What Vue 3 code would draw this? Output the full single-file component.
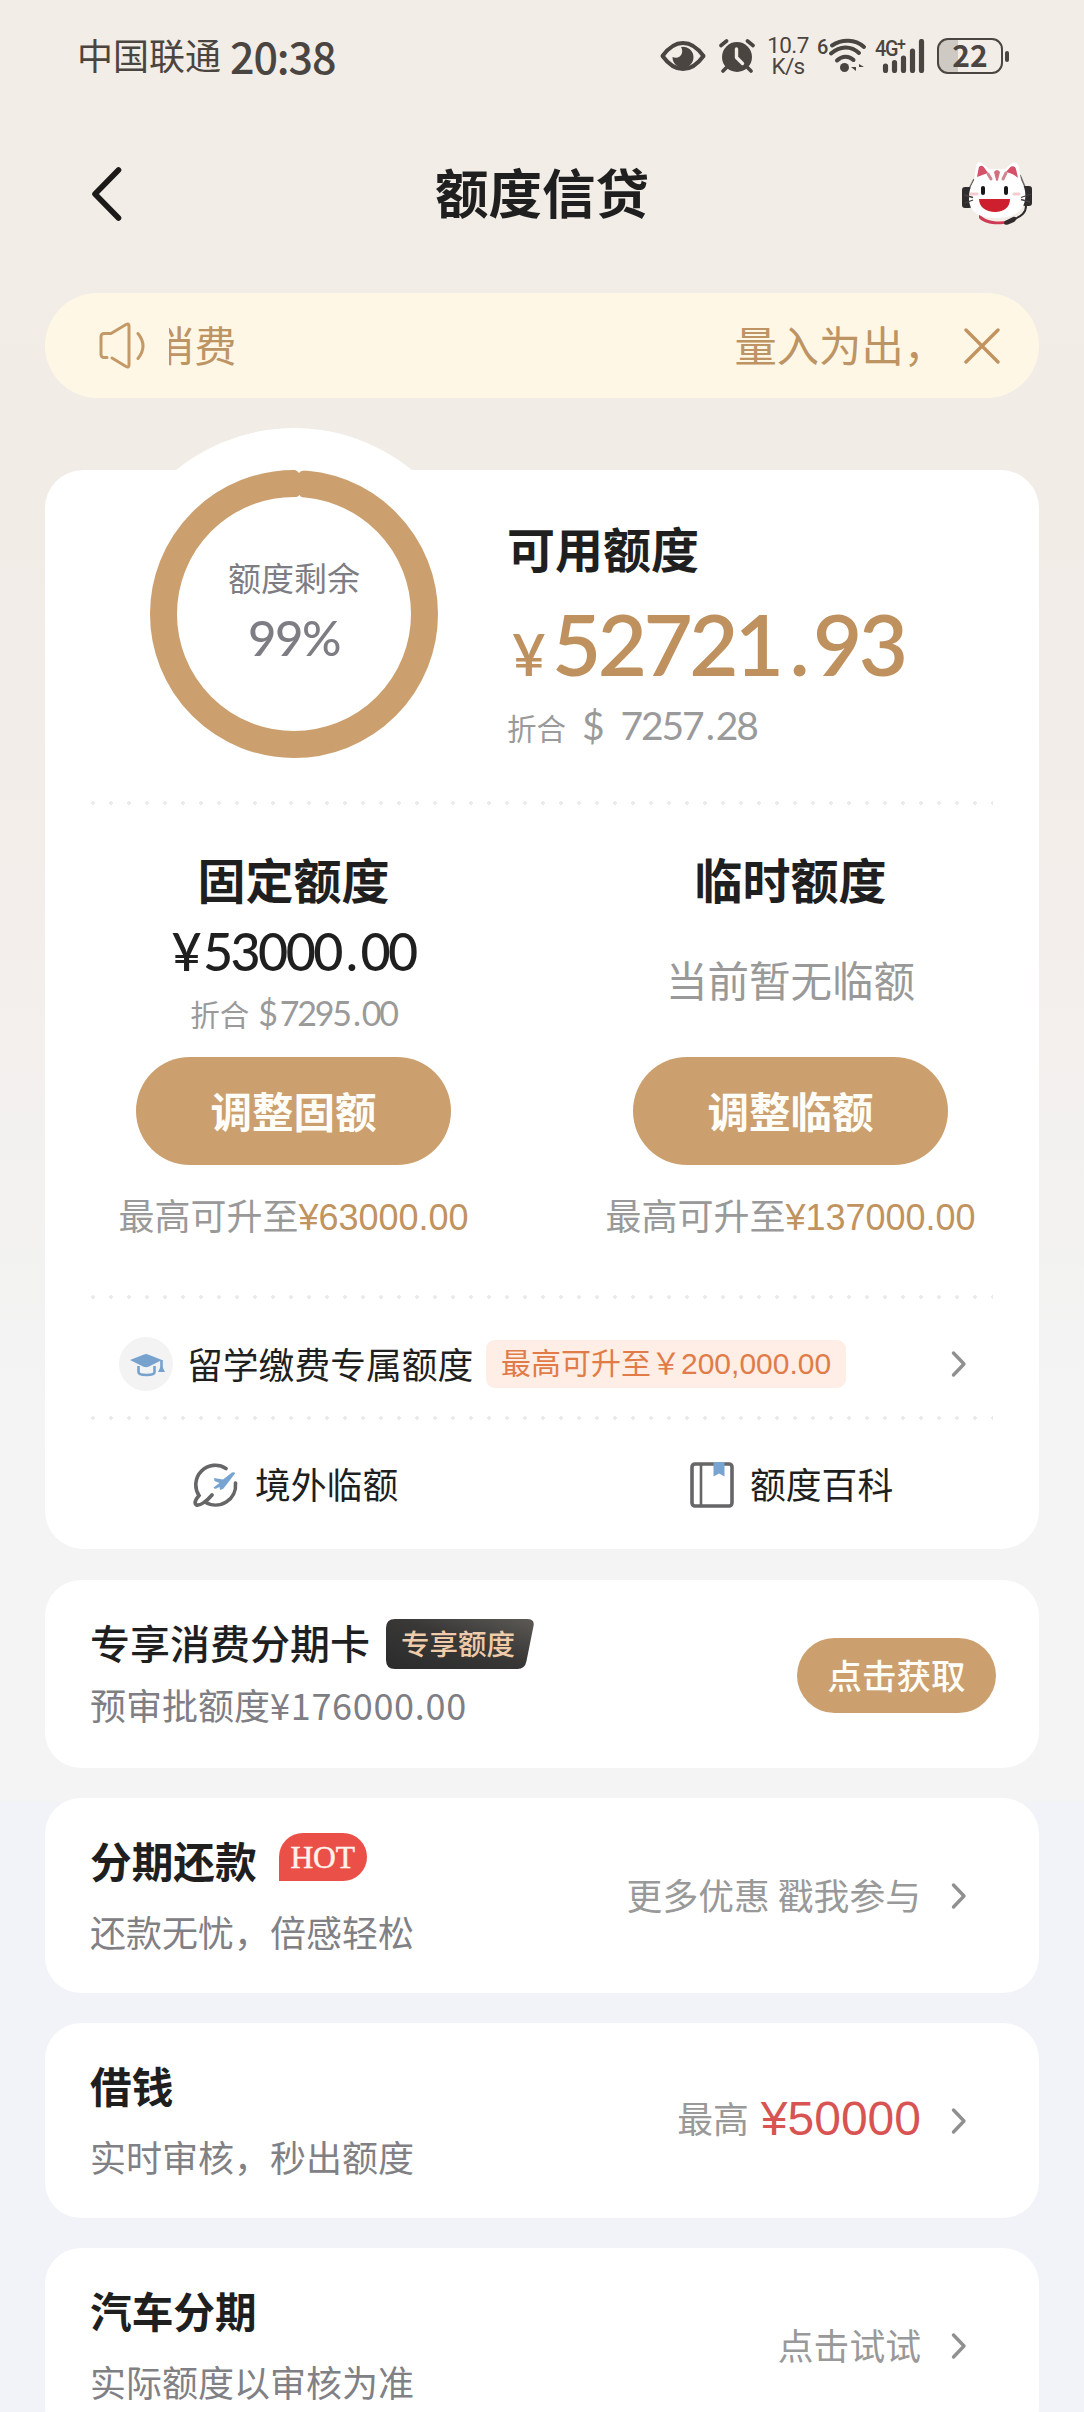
<script setup>
const services = [
  { title: '分期还款', hot: true, desc: '还款无忧，倍感轻松', action: '更多优惠 戳我参与' },
  { title: '借钱', desc: '实时审核，秒出额度', action: '最高', amount: '¥50000' },
  { title: '汽车分期', desc: '实际额度以审核为准', action: '点击试试' },
]
</script>

<template>
  <div class="screen">
    <header class="status">
      <span class="carrier">中国联通</span>
      <span class="clock">20:38</span>
      <div class="status-icons">
        <svg class="eye" width="46" height="32" viewBox="0 0 46 32">
          <path d="M2.500 16C9 7 16 3 23 3s14 4 20.500 13C37 25 30 29 23 29S9 25 2.500 16Z" fill="none" stroke="#4b4541" stroke-width="4" stroke-linejoin="round" />
          <path d="M21 7a10.500 10.500 0 1 1-8.500 10c4 2 8.500 0 9.500-4 .5-2.500 0-4.500-1-6Z" fill="#4b4541" />
        </svg>
        <svg class="alarm" width="36" height="34" viewBox="0 0 36 34">
          <circle cx="18" cy="18" r="15" fill="#4b4541" />
          <path d="M2 6.500 7.500 2M34 6.500 28.500 2M8 28l-4 4M28 28l4 4" stroke="#4b4541" stroke-width="3.600" stroke-linecap="round" />
          <path d="M17.500 10v8.500l6 6" fill="none" stroke="#f2ede7" stroke-width="3.400" stroke-linecap="round" stroke-linejoin="round" />
        </svg>
        <div class="speed"><span>10.7</span><span>K/s</span></div>
        <div class="wifi">
          <span>6</span>
          <svg width="40" height="36" viewBox="0 0 40 36">
            <g fill="none" stroke="#4b4541" stroke-width="4" stroke-linecap="round">
              <path d="M4 7.500C14 1 27 1 36 9" />
              <path d="M3 15.500C12 7.500 23 7.500 31 15" />
              <path d="M9 22.500C14 17.500 21 17.500 25.500 22" />
            </g>
            <circle cx="16.500" cy="29.500" r="4.500" fill="#4b4541" />
            <path d="M28 26v7l-5-4h5M31 33v-7l5 3h-5" fill="#4b4541" />
          </svg>
        </div>
        <div class="signal">
          <span>4G<sup>+</sup></span>
          <svg width="44" height="34" viewBox="0 0 44 34">
            <path d="M3.500 27v4.500M12.500 23.500v8M21.500 19v12.500M30.500 12v19.500M39.500 2.500v29" stroke="#4b4541" stroke-width="5.200" stroke-linecap="round" />
          </svg>
        </div>
        <div class="battery"><div class="cell">22</div><i></i></div>
      </div>
    </header>

    <nav class="nav">
      <svg class="back" width="32" height="54" viewBox="0 0 32 54">
        <path d="M28.500 3 5 27 28.500 51" fill="none" stroke="#1c1a18" stroke-width="5.600" stroke-linecap="round" stroke-linejoin="round" />
      </svg>
      <h1>额度信贷</h1>
      <svg class="mascot" width="72" height="66" viewBox="0 0 72 66">
        <path d="M8 28l5-10M59 14l5 12" fill="none" stroke="#6a6462" stroke-width="1.500" />
        <rect x="1" y="26" width="10" height="21" rx="3" fill="#2f2c2e" />
        <rect x="61" y="25" width="10" height="20" rx="3" fill="#2f2c2e" />
        <path d="M18 53c8 9 26 10 37 3v3c-9 6-31 6-37-2Z" fill="#cf3b55" />
        <path d="M13 20 15 5c1-4 4-5 7-2l6 5h16l6-5c3-3 7-1 8 3l2 14c4 6 5 12 4 19-2 13-14 18-29 18S9 52 8 39c0-8 1-13 5-19Z" fill="#fff" />
        <path d="m16 16 1.500-8c.5-4 4-4 6-1l3.500 5c-4 1-7 3-11 4ZM45 11l3.500-4c2-3 6-2 6.500 1l2 9c-3-3-7-5-12-6Z" fill="#d65068" />
        <path d="M33 11q3-4 6 0l-2 8q-1 2-2 0Z" fill="#d46f80" />
        <path d="m27 13 3 5M45 12l-3 6" stroke="#cf8790" stroke-width="3" stroke-linecap="round" />
        <rect x="20" y="25" width="4" height="9" rx="2" fill="#171717" />
        <rect x="43" y="25" width="4" height="9" rx="2" fill="#171717" />
        <path d="M18 38h31c0 8-6 13-15 13s-16-5-16-13Z" fill="#cd1f2e" />
        <path d="M3 34l9 2.500M4 42l8-3M70 33l-10 3.500M69 41l-9-2.500" stroke="#473f40" stroke-width="1.300" />
        <path d="M10 33h6M53 33h5" stroke="#f6cbd0" stroke-width="3" stroke-linecap="round" />
        <path d="M65 45c0 7-5 10-11 13" fill="none" stroke="#2f2c2e" stroke-width="2" />
        <path d="m44 60 8-4c4-1 4 3 1 5l-6 2.500c-4 1-5-1-3-3.500Z" fill="#2f2c2e" />
      </svg>
    </nav>

    <section class="notice">
      <svg width="50" height="48" viewBox="0 0 50 48">
        <path d="M9 35.500H6a3 3 0 0 1-3-3v-18a3 3 0 0 1 3-3h7L28 2.500Q31 1 31 4v39q0 3-3 1.500L14 36" fill="none" stroke="#c39a67" stroke-width="3" stroke-linecap="round" stroke-linejoin="round" />
        <path d="M40 11.500q10 12.500 0 25" fill="none" stroke="#c39a67" stroke-width="3" stroke-linecap="round" />
      </svg>
      <div class="ticker"><span class="leaving">消费</span><span>量入为出，</span></div>
      <svg width="36" height="36" viewBox="0 0 36 36">
        <path d="m2 2 32 32M34 2 2 34" stroke="#c0935f" stroke-width="3.400" stroke-linecap="round" />
      </svg>
    </section>

    <main class="quota">
      <div class="hero">
        <div class="ring">
          <svg width="372" height="372" viewBox="0 0 372 372">
            <circle cx="186" cy="186" r="130.500" fill="none" stroke="#cba06e" stroke-width="27" />
            <path d="M184 41q5 1 7 4 2-3 8-3v-3h-15ZM185 70q5-1 6.500-3 2 3 7.500 4l-7 2Z" fill="#fff" />
          </svg>
          <div class="ring-text"><span>额度剩余</span><b>99%</b></div>
        </div>
        <div class="available">
          <h2>可用额度</h2>
          <div class="money"><small>¥</small><span>52721<i>.</i>93</span></div>
          <div class="usd"><small>折合</small><em>$</em><span>7257<i>.</i>28</span></div>
        </div>
      </div>
      <div class="dots"></div>
      <div class="columns">
        <div class="column left">
          <h2>固定额度</h2>
          <div class="fixed"><em>¥</em>53000<i>.</i>00</div>
          <div class="fixed-usd"><small>折合</small><em>$</em>7295<i>.</i>00</div>
          <button>调整固额</button>
          <p><span>最高可升至</span><b>¥63000.00</b></p>
        </div>
        <div class="column">
          <h2>临时额度</h2>
          <div class="none">当前暂无临额</div>
          <button>调整临额</button>
          <p><span>最高可升至</span><b>¥137000.00</b></p>
        </div>
      </div>
      <div class="dots"></div>
      <div class="study">
        <svg class="cap" width="54" height="54" viewBox="0 0 54 54">
          <circle cx="27" cy="27" r="27" fill="#f3f3f4" />
          <path d="M11 23 25 17.500q2-.8 4 0L43 23l-13 6.500q-3 1.300-6 0Z" fill="#77a2cd" />
          <path d="M19.500 29v6c0 4 16 4 16 0v-6M42.500 23v9" fill="none" stroke="#77a2cd" stroke-width="2.600" />
          <path d="m42.500 28 3.500 7h-7Z" fill="#77a2cd" />
        </svg>
        <span class="study-name">留学缴费专属额度</span>
        <span class="study-tag">最高可升至￥200,000.00</span>
        <svg class="chevron" width="18" height="28" viewBox="0 0 18 28"><path d="m3.500 3 10.500 11L3.500 25" /></svg>
      </div>
      <div class="dots"></div>
      <div class="links">
        <div>
          <svg width="46" height="46" viewBox="0 0 46 46">
            <g fill="none" stroke="#666567" stroke-width="3.600" stroke-linecap="round">
              <path d="M33 6.500A19.500 19.500 0 0 0 6 33.500C2 38 1 42 3.500 43 7 44 14 39 19 33" />
              <path d="M42.500 21A20 20 0 0 1 12 40" />
            </g>
            <path d="m21 16 9 1.500 9-7q3-1 3 1L34 22l-4 5-3 1-.5-3-4.500 2-1.500-1.500 6-4.500-5-2Z" fill="#78a4d2" />
          </svg>
          <span>境外临额</span>
        </div>
        <div>
          <svg width="44" height="46" viewBox="0 0 44 46">
            <rect x="2" y="2" width="40" height="42" rx="3" fill="none" stroke="#666567" stroke-width="3.600" />
            <path d="M11 2v42" stroke="#666567" stroke-width="2.600" />
            <path d="M23.500 0h11v14.500l-5.500-3-5.500 3Z" fill="#78a4d2" />
          </svg>
          <span>额度百科</span>
        </div>
      </div>
    </main>

    <section class="card promo">
      <div>
        <div class="promo-head">
          <h3>专享消费分期卡</h3>
          <div class="vip">
            <svg width="148" height="50" viewBox="0 0 148 50">
              <defs>
                <linearGradient id="vipFill" x1="0" y1="1" x2="1" y2="0">
                  <stop offset="0" stop-color="#2b2b2b" /><stop offset=".55" stop-color="#393837" /><stop offset="1" stop-color="#5d5a56" />
                </linearGradient>
              </defs>
              <path d="M9 0h132q8 0 6.500 7l-7 35q-1.500 8-9 8H9q-9 0-9-9V9Q0 0 9 0Z" fill="url(#vipFill)" />
            </svg>
            <span>专享额度</span>
          </div>
        </div>
        <p>预审批额度<span>¥176000.00</span></p>
      </div>
      <button>点击获取</button>
    </section>

    <section v-for="item in services" :key="item.title" class="card service">
      <div>
        <div class="service-head">
          <h3>{{ item.title }}</h3>
          <span v-if="item.hot" class="hot">HOT</span>
        </div>
        <p>{{ item.desc }}</p>
      </div>
      <div class="action">
        <span :class="{ prefix: item.amount }">{{ item.action }}</span>
        <b v-if="item.amount">{{ item.amount }}</b>
        <svg class="chevron" width="18" height="28" viewBox="0 0 18 28"><path d="m3.500 3 10.500 11L3.500 25" /></svg>
      </div>
    </section>
  </div>
</template>

<style>
html,
body {
  margin: 0;
  overflow: hidden;
}
</style>

<style scoped>
.screen {
  box-sizing: border-box;
  width: 1084px;
  height: 2412px;
  overflow: hidden;
  display: flex;
  flex-direction: column;
  font-family: 'Noto Sans CJK SC', sans-serif;
  color: #1f1f1f;
  background: linear-gradient(#f2ede7 0, #f1ece6 500px, #f3eeeb 920px, #f3f2f1 1200px, #f4f4f4 1450px, #f4f4f4 1800px, #f2f3f9 1804px);
}
.screen > * { flex-shrink: 0; }
h1, h2, h3, p { margin: 0; }
em, i { font-style: normal; }
button {
  border: 0;
  padding: 0;
  font-family: inherit;
  color: #fffdf8;
  background: #cba06e;
}
.chevron { fill: none; stroke: #909090; stroke-width: 3.4; stroke-linecap: round; stroke-linejoin: round; }

.status {
  height: 112px;
  display: flex;
  align-items: center;
  padding-left: 77px;
  color: #4b4541;
}
.carrier { font-size: 36px; line-height: 112px; margin-top: -4px; }
.clock { font-size: 43px; line-height: 112px; font-weight: 500; margin: -3px 0 0 9px; width: 107px; letter-spacing: -1.1px; }
.status-icons { display: flex; align-items: center; height: 112px; margin-left: 323px; }
.eye { margin-right: 13px; }
.alarm { margin-right: 13px; }
.speed {
  width: 40px;
  display: flex;
  flex-direction: column;
  align-items: center;
  font-family: Roboto, sans-serif;
  font-size: 22.5px;
  line-height: 21px;
  letter-spacing: -0.6px;
}
.wifi { display: flex; align-items: flex-start; height: 36px; margin-left: 9px; width: 50px; }
.wifi span { font: 500 20px/18px Roboto, sans-serif; width: 11px; flex: none; }
.wifi svg { flex: none; }
.signal { position: relative; width: 52px; height: 34px; margin-left: 8px; display: flex; justify-content: flex-end; }
.signal svg { margin-right: 1px; }
.signal span { position: absolute; left: 0; top: -2px; font: 500 22.5px/22px Roboto, sans-serif; letter-spacing: -1.5px; transform: scaleX(.88); transform-origin: left; }
.signal sup { font-size: 18px; line-height: 0; vertical-align: 6px; }
.battery { display: flex; align-items: center; margin-left: 10px; }
.cell {
  box-sizing: border-box;
  width: 66px;
  height: 36px;
  border: 2.6px solid #4b4541;
  border-radius: 11px;
  background: linear-gradient(90deg, #cfc9c4 19px, transparent 19px);
  font: 600 30px/29px 'Noto Sans CJK SC', sans-serif;
  text-align: center;
}
.battery i { width: 4px; height: 11px; border-radius: 2px; margin-left: 2px; background: #4b4541; }

.nav { height: 181px; display: flex; align-items: flex-start; }
.back { margin: 55px 0 0 90px; }
h1 { font-size: 53.5px; line-height: 80px; font-weight: 700; margin: 39px 0 0 313px; width: 214px; white-space: nowrap; }
.mascot { margin: 49px 0 0 312px; }

.notice {
  box-sizing: border-box;
  width: 994px;
  height: 105px;
  margin-left: 45px;
  border-radius: 53px;
  background: #fff7e6;
  display: flex;
  align-items: center;
  padding: 0 39px 0 53px;
  color: #bd9463;
  font-size: 42.3px;
}
.ticker { width: 777px; margin: -5px auto 0 21px; overflow: hidden; display: flex; justify-content: space-between; line-height: 105px; }
.leaving { margin-left: -17px; }

.quota {
  width: 994px;
  height: 1079px;
  margin: 72px 0 0 45px;
  background: #fff;
  border-radius: 38px;
}
.hero { height: 331px; display: flex; padding-left: 63px; }
.ring { display: grid; width: 372px; height: 372px; margin-top: -42px; border-radius: 50%; background: #fff; }
.ring > * { grid-area: 1 / 1; }
.ring-text { display: flex; flex-direction: column; align-items: center; padding-top: 126px; color: #7d7d83; }
.ring-text span { font-size: 33px; line-height: 46px; }
.ring-text b { font: 500 49px/60px Lato, sans-serif; margin-top: 7px; letter-spacing: -1.5px; }
.available { margin-left: 27px; padding-top: 41px; }
h2 { font-size: 48px; line-height: 72px; font-weight: 700; }
.money { font: 600 85px/100px Lato, sans-serif; color: #be915f; margin-top: 10px; height: 100px; white-space: nowrap; letter-spacing: -3.6px; }
.money small { font-size: 58px; line-height: 1; margin-right: 10px; margin-left: 5px; }
.money span { line-height: 1; }
.money i { margin: 0 7px 0 9px; }
.usd { font: 400 39px/50px Lato, 'Noto Sans CJK SC', sans-serif; color: #9a9a9a; margin-top: 7px; letter-spacing: -2.1px; white-space: nowrap; }
.usd small { font-size: 29.5px; line-height: 1; letter-spacing: 0; }
.usd em { margin: 0 18px 0 16px; }
.usd i { margin: 0 3px; }
.dots { height: 4px; margin: 0 46px; background: radial-gradient(circle, #ebebeb 1.6px, transparent 2.1px) -7px 0 / 18px 4px repeat-x; }

.columns { height: 490px; display: flex; }
.column { flex: 1; display: flex; flex-direction: column; align-items: center; padding-top: 37px; }
.left { padding-right: 2px; margin-right: -2px; }
.fixed { font: 500 52px/60px Lato, sans-serif; margin-top: 7px; letter-spacing: -2.6px; color: #1f1f1f; }
.fixed em { margin-right: 4px; }
.fixed i { margin: 0 5px; }
.fixed-usd { font: 400 34px/40px Lato, 'Noto Sans CJK SC', sans-serif; margin-top: 12px; letter-spacing: -2.2px; color: #9a9a9a; }
.fixed-usd small { font-size: 29.5px; line-height: 1; letter-spacing: 0; margin-right: 9px; }
.fixed-usd em { margin-right: 4px; }
.fixed-usd i { margin: 0 3px; }
.column button { width: 315px; height: 108px; border-radius: 54px; font-size: 41.5px; line-height: 102px; padding-bottom: 3px; font-weight: 700; margin-top: 24px; }
.column p { font: 400 36px/50px 'Liberation Sans', 'Noto Sans CJK SC', sans-serif; margin-top: 28px; color: #999; white-space: nowrap; }
.column b { font-weight: 400; color: #c0935f; }
.none { font-size: 41.5px; line-height: 60px; color: #999; margin: 35px 0 24px; }

.study { height: 117px; display: flex; align-items: center; padding: 12px 0 0 74px; box-sizing: border-box; }
.study-name { font-size: 35.8px; line-height: 48px; margin: -1px 0 0 14px; width: 286px; white-space: nowrap; }
.study-tag {
  box-sizing: border-box;
  width: 360px;
  height: 48px;
  margin-left: 13px;
  padding-left: 15px;
  border-radius: 9px;
  background: #feeee6;
  color: #e17c48;
  font: 400 30px/48px 'Liberation Sans', 'Noto Sans CJK SC', sans-serif;
  white-space: nowrap;
}
.study .chevron { margin-left: 104px; }
.links { display: flex; padding-top: 42px; font-size: 35.8px; line-height: 46px; }
.links div { flex: 1; display: flex; align-items: center; padding-left: 148px; }
.links svg { margin-right: 16px; }
.links span { margin-top: -4px; }

.card {
  box-sizing: border-box;
  width: 994px;
  margin: 30px 0 0 45px;
  background: #fff;
  border-radius: 36px;
  display: flex;
  justify-content: space-between;
  padding-left: 45px;
}
.promo { height: 188px; margin-top: 31px; }
.promo-head { display: flex; padding-top: 39px; height: 50px; }
.promo h3 { font-size: 40px; line-height: 50px; font-weight: 500; margin: -2px 16px 0 0; }
.vip { display: grid; }
.vip > * { grid-area: 1 / 1; }
.vip span { font-size: 28.5px; line-height: 48px; padding-left: 15px; color: #f0cba9; font-weight: 500; }
.promo p { font-size: 36px; line-height: 50px; color: #7e7e84; margin-top: 10px; }
.promo p span { letter-spacing: 0.7px; }
.promo button { width: 199px; height: 75px; border-radius: 38px; font-size: 34.5px; line-height: 70px; padding-bottom: 3px; font-weight: 500; margin: 58px 43px 0 0; }

.service { height: 195px; }
.service-head { display: flex; padding-top: 35px; height: 56px; }
.service h3 { font-size: 41.7px; line-height: 56px; font-weight: 700; margin-top: -1px; }
.hot {
  width: 88px;
  height: 48px;
  margin-left: 22px;
  border-radius: 26px 26px 26px 0;
  background: #eb5048;
  color: #fff2ec;
  font: 400 31.5px/49px 'Liberation Serif', serif;
  -webkit-text-stroke: 0.5px #fff2ec;
  text-align: center;
}
.service p { font-size: 36px; line-height: 50px; color: #808085; margin-top: 17px; }
.action { display: flex; align-items: center; color: #999; font-size: 35.8px; line-height: 50px; margin-right: 71px; }
.action span { margin-top: -4px; }
.action .prefix { margin-top: -8px; }
.action b { font: 400 48px/50px 'Liberation Sans', sans-serif; color: #d85452; margin: -3px 0 0 12px; }
.action .chevron { margin-left: 29px; }
</style>
